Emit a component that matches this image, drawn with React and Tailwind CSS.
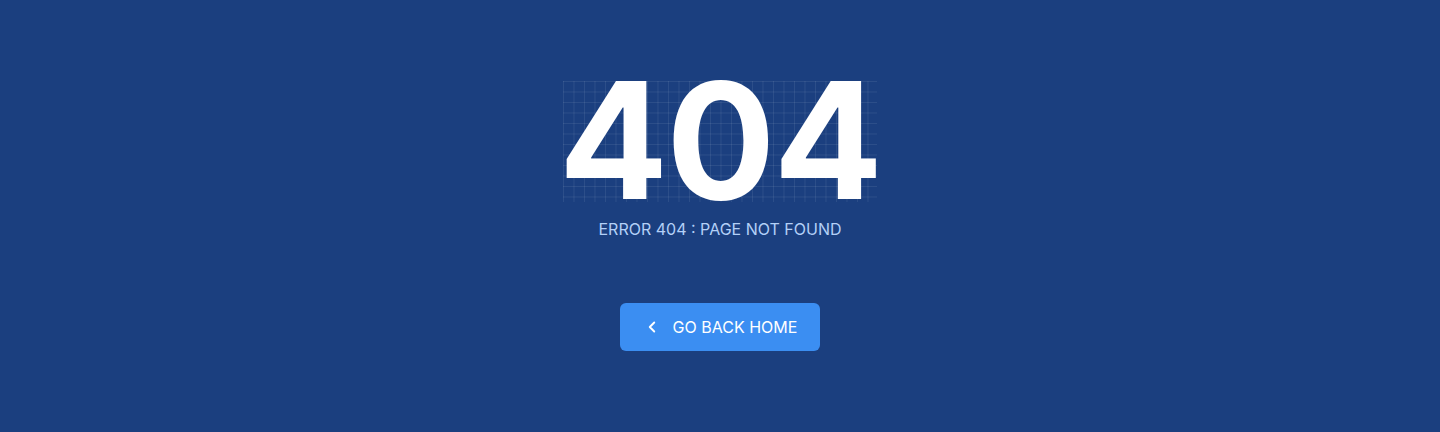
import React from 'react';
import { ChevronLeft } from 'lucide-react';

const App = () => {
  return (
    <div className="h-screen w-full bg-[#1b3f7f] flex flex-col items-center justify-center font-['Inter',sans-serif]">
      <div className="relative flex items-start justify-center h-[130px]">
        {/* grid behind the number */}
        <div className="absolute left-1/2 top-0 -translate-x-1/2 w-[314px] h-[121px] bg-[linear-gradient(rgba(255,255,255,0.08)_1px,transparent_1px),linear-gradient(90deg,rgba(255,255,255,0.08)_1px,transparent_1px)] bg-[size:10.5px_10.5px]" />
        <h1 className="relative text-[162px] leading-[118px] font-bold text-white tracking-[-2px]">404</h1>
      </div>
      <p className="mt-[8px] text-base leading-5 text-[#b3d0f7]">ERROR 404 : PAGE NOT FOUND</p>
      <button className="mt-[64px] w-[200px] h-12 rounded-md bg-[#3b8ef2] flex items-center justify-center gap-3 text-white text-base">
        <ChevronLeft size={18} strokeWidth={2.5} />
        <span>GO BACK HOME</span>
      </button>
    </div>
  );
};

export default App;
